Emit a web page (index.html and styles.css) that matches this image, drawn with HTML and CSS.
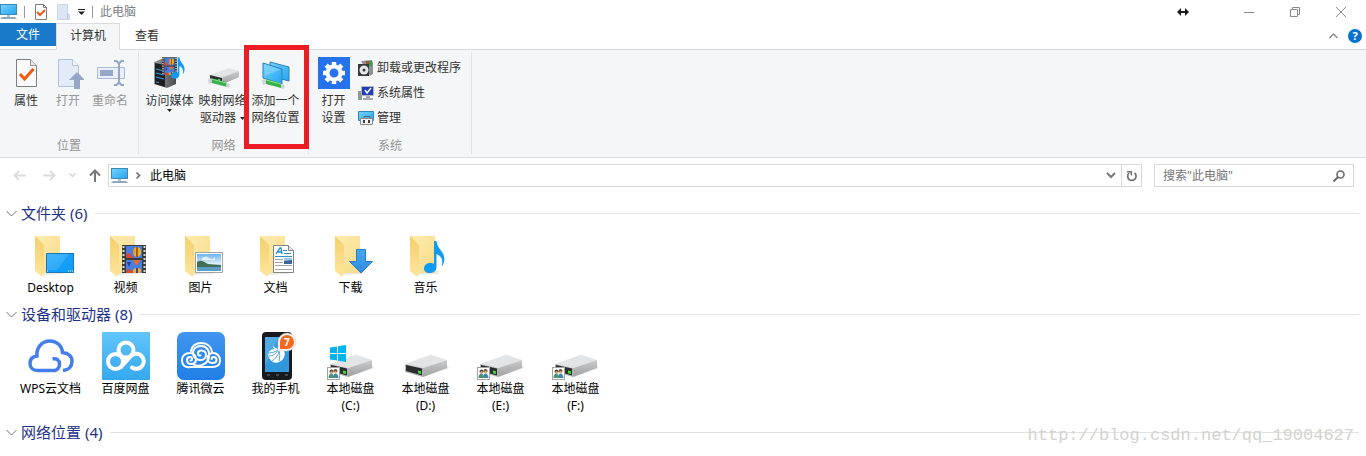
FILE: index.html
```html
<!DOCTYPE html>
<html lang="zh-CN">
<head>
<title>此电脑</title>
<meta charset="UTF-8">
<meta name="viewport" content="width=device-width, initial-scale=1.0">
<link rel="stylesheet" href="styles.css">
</head>
<body>
<!-- shared icon parts -->
<svg class="defs" width="0" height="0" aria-hidden="true">
    <defs>
        <linearGradient id="g-screen" x1="0" y1="0" x2="1" y2="1"><stop offset="0" stop-color="#79d2fb"/><stop offset="1" stop-color="#1fa5f5"/></linearGradient>
        <linearGradient id="g-folder" x1="0" y1="0" x2="1" y2="1"><stop offset="0" stop-color="#fdebb0"/><stop offset="1" stop-color="#f8dc88"/></linearGradient>
        <linearGradient id="g-flap" x1="0" y1="0" x2="0" y2="1"><stop offset="0" stop-color="#f3cf6c"/><stop offset="1" stop-color="#ffe59c"/></linearGradient>
        <linearGradient id="g-desk" x1="0" y1="0" x2="1" y2="1"><stop offset="0" stop-color="#2cb0fc"/><stop offset=".5" stop-color="#16a0f8"/><stop offset="1" stop-color="#0c9afc"/></linearGradient>
        <linearGradient id="g-arrow" x1="0" y1="0" x2="0" y2="1"><stop offset="0" stop-color="#4aa7ef"/><stop offset="1" stop-color="#2e8be0"/></linearGradient>
        <linearGradient id="g-side" x1="0" y1="0" x2="0" y2="1"><stop offset="0" stop-color="#c9cacb"/><stop offset="1" stop-color="#9fa1a3"/></linearGradient>
        <linearGradient id="g-sky" x1="0" y1="0" x2="0" y2="1"><stop offset="0" stop-color="#6db3ee"/><stop offset=".6" stop-color="#e3f1fa"/><stop offset="1" stop-color="#4a8fbf"/></linearGradient>
        <linearGradient id="g-baidu" x1="0" y1="0" x2="0" y2="1"><stop offset="0" stop-color="#62c5fb"/><stop offset="1" stop-color="#35a9ee"/></linearGradient>
        <linearGradient id="g-weiyun" x1="0" y1="0" x2="0" y2="1"><stop offset="0" stop-color="#4196f0"/><stop offset="1" stop-color="#207fe6"/></linearGradient>
        <linearGradient id="g-tower" x1="0" y1="0" x2="1" y2="0"><stop offset="0" stop-color="#999"/><stop offset="1" stop-color="#4c4c4e"/></linearGradient>
    </defs>
    <symbol id="monitor" viewBox="0 0 17 15">
        <rect x=".5" y=".5" width="16" height="10" fill="url(#g-screen)" stroke="#3d88b5"/>
        <path d="M7 11h3v2H7z" fill="#a9c3d2"/>
        <path d="M2 13h13l2 2H0z" fill="#8fa9b8"/>
    </symbol>
    <symbol id="folder" viewBox="-1 0 49 48">
        <path d="M14 44l22-1 1-3H16z" fill="#e9e9e9"/>
        <path d="M8 5h25v37H15z" fill="url(#g-folder)"/>
        <path d="M8 5l8 8c1 1 1 2 1 4v24c0 3-1 5-3 4l-6-5z" fill="url(#g-flap)"/>
    </symbol>
    <symbol id="drive" viewBox="-1 0 49 48">
        <path d="M22 45l25-9-2-3-20 9z" fill="#e8e8e8"/>
        <path d="M3 32l25-9q1-.5 2 0l15 5-24 8z" fill="#e3e4e6"/>
        <path d="M21 36l24-8v8l-24 9z" fill="url(#g-side)"/>
        <path d="M3 32l18 4v9L3 40z" fill="#b4b6b8"/>
        <path d="M4 33l16 3.500v7L4 39z" fill="#2b2d2f"/>
        <path d="M16 38.500l3 .7V42l-3-.7z" fill="#3be03b"/>
    </symbol>
    <symbol id="shared" viewBox="-1 0 49 48">
        <rect x=".5" y="35.500" width="12" height="12" fill="#fff" stroke="#a3a3a3"/>
        <circle cx="4.500" cy="39.500" r="2" fill="#5b4632"/><circle cx="8.500" cy="39" r="2" fill="#6a533a"/>
        <circle cx="4.500" cy="40.500" r="1.200" fill="#e7b58c"/><circle cx="8.500" cy="40.200" r="1.200" fill="#e7b58c"/>
        <path d="M6 46c0-6 5-6 5.500 0z" fill="#3f83b3"/><path d="M1.500 46c0-6 5-6 6 0z" fill="#4d9272"/>
    </symbol>
    <symbol id="film" viewBox="0 0 24 28">
        <path d="M0 0h24v28H0z" fill="#3a3a3c"/>
        <path d="M1.500 1v27M22.500 1v27" stroke="#d9d9d9" stroke-width="2" stroke-dasharray="2 2"/>
        <path d="M4 1h16v12H4zM4 15h16v13H4z" fill="#4a7de0"/>
        <path d="M4 9l3-1 5 5H4zM4 25l4-1 4 4H4z" fill="#d3493a"/>
        <ellipse cx="15" cy="7" rx="4" ry="5" fill="#f0b41e"/><path d="M15 2v10" stroke="#8b3a2a" stroke-width="1.500"/><path d="M12 4v5" stroke="#e0702a"/>
        <path d="M11 15h7l-3 5h-1z" fill="#ed6a2b"/>
        <ellipse cx="15" cy="26" rx="4" ry="3" fill="#f0b41e"/><path d="M15 23v5" stroke="#563a7d" stroke-width="2"/>
        <path d="M5 17h4l-2 5z" fill="#243f8e"/>
    </symbol>
    <symbol id="note" viewBox="0 0 21 32">
        <path d="M10 0h2.500c.5 4 2 6 4 9 4 5 5 9 2.500 15-.5 1-1.500 1-1 0 1-5-.5-9-5.500-11v13c0 4-3.500 6-7 6s-5.500-2-5.500-4.500C0 24 3 22 6.500 22c1.500 0 2.500.3 3.500.8z" fill="#0d9bf2"/>
    </symbol>
    <symbol id="pipe" viewBox="0 0 24 10">
        <path d="M1 1l4-1 1 4-4 2zM20 5l4 1-1 4-4-1z" fill="#cfd3d5"/>
        <path d="M5 0l15 4v5L5 5z" fill="#37b24a"/><path d="M5 1l15 4" stroke="#8ee096"/>
    </symbol>
</svg>

<header class="titlebar">
    <svg class="tb-icon" width="17" height="15"><use href="#monitor"/></svg>
    <span class="tb-sep"></span>
    <button class="tb-btn" aria-label="属性"><svg width="12" height="16" viewBox="0 0 12 16"><path d="M.5.500h8l3 3v12H.500z" fill="#fff" stroke="#7d7d7d"/><path d="M8.500.500v3h3" fill="none" stroke="#7d7d7d"/><path d="M2 8l3 3 5-5" fill="none" stroke="#ea5a15" stroke-width="2"/></svg></button>
    <button class="tb-btn" aria-label="新建文件夹"><svg width="13" height="16" viewBox="0 0 13 16"><path d="M.5.500h10v9l2 1v5H.500z" fill="#dbe5f3" stroke="#c9d6e8"/><path d="M10.500 9v6" stroke="#b7c6dc"/></svg></button>
    <button class="tb-btn tb-more" aria-label="自定义快速访问工具栏"><svg width="7" height="6" viewBox="0 0 7 6"><path d="M0 0h7v1H0zM0 2.500h7L3.500 6z" fill="#222"/></svg></button>
    <span class="tb-sep"></span>
    <h1 class="tb-title">此电脑</h1>
    <svg class="tb-resize" width="12" height="8" viewBox="0 0 12 8"><path d="M0 4l4-4v3h4V0l4 4-4 4V5H4v3z" fill="#1c1c1c"/></svg>
    <button class="win-btn" aria-label="最小化"><svg width="10" height="10"><path d="M0 5.500h10" stroke="#8a8a8a"/></svg></button>
    <button class="win-btn" aria-label="还原"><svg width="10" height="10" fill="none" stroke="#8a8a8a"><path d="M.5 2.500h7v7h-7zM2.500 2.500v-2h7v7h-2"/></svg></button>
    <button class="win-btn" aria-label="关闭"><svg width="10" height="10"><path d="M0 0l10 10M10 0L0 10" stroke="#8a8a8a"/></svg></button>
</header>

<nav class="tabs">
    <button class="tab tab-file">文件</button>
    <button class="tab tab-active">计算机</button>
    <button class="tab">查看</button>
    <button class="tab-tool" aria-label="最小化功能区"><svg width="9" height="6"><path d="M.5 5l4-4 4 4" fill="none" stroke="#8e8e8e" stroke-width="1.500"/></svg></button>
    <button class="tab-tool" aria-label="帮助"><span class="help">?</span></button>
</nav>

<div class="ribbon">
    <section class="group group-place">
        <div class="group-body">
            <button class="big">
                <svg width="32" height="32" viewBox="0 0 32 32"><path d="M6.500 2.500h14l6 6v21h-20z" fill="#fbfbfb" stroke="#7e7e7e"/><path d="M20.500 2.500v6h6" fill="#e8e8e8" stroke="#8f8f8f"/><path d="M10 17l4.500 5 9-10" fill="none" stroke="#ee5a12" stroke-width="3"/></svg>
                属性
            </button>
            <button class="big" disabled>
                <svg width="32" height="32" viewBox="0 0 32 32"><path d="M6.500 2.500h14l6 6v21h-20z" fill="#e2ebf8" stroke="#afc2df"/><path d="M20.500 2.500v6h6" fill="#f3f7fc" stroke="#afc2df"/><path d="M25 15l8 8h-5v9h-6v-9h-5z" fill="#94a7c6"/></svg>
                打开
            </button>
            <button class="big" disabled>
                <svg width="32" height="32" viewBox="0 0 32 32"><path d="M3.500 10.500h27v11h-27z" fill="#e8effa" stroke="#a9bbd8"/><path d="M6 13h13v6H6z" fill="#94a7c6"/><path d="M20 3h3l2 2 2-2h3v2h-2l-2 2v18l2 2h2v2h-3l-2-2-2 2h-3v-2h2l2-2V7l-2-2h-2z" fill="#94a7c6"/></svg>
                重命名
            </button>
        </div>
        <div class="group-label">位置</div>
    </section>
    <section class="group group-net">
        <div class="group-body">
            <button class="big">
                <svg width="32" height="32" viewBox="0 0 32 32"><path d="M0 5l10-4 12 3v23l-9 4-13-4z" fill="url(#g-tower)"/><path d="M1 6l10 2v22L1 27z" fill="#1e1f22"/><path d="M2 12l8 2M2 16l8 2M2 20l8 2" stroke="#2a9ee8" stroke-width="1.200"/><path d="M2 25l3 .5" stroke="#2a9ee8"/><use href="#film" x="8" y="0" width="15" height="18"/><use href="#note" x="17" y="0" width="14" height="22"/></svg>
                访问媒体
                <svg class="caret" width="5" height="3"><path d="M0 0h5L2.500 3z" fill="#222"/></svg>
            </button>
            <button class="big">
                <svg width="32" height="32" viewBox="0 0 32 32"><path d="M3 18l19-7 10 3-18 8z" fill="#e3e4e6"/><path d="M14 21l18-7v6l-18 8z" fill="url(#g-side)"/><path d="M3 18l12 3v6L3 23z" fill="#2b2d2f"/><path d="M11 22h2v2h-2z" fill="#3be03b"/><use href="#pipe" x="0" y="21" width="23" height="10"/></svg>
                映射网络<br>驱动器<svg class="caret-side" width="5" height="3"><path d="M0 0h5L2.500 3z" fill="#222"/></svg>
            </button>
            <button class="big marked">
                <svg width="32" height="32" viewBox="0 0 32 32"><path d="M10 5l19 5v14l-19-5z" fill="url(#g-screen)" stroke="#2c80b5"/><path d="M3 6l19 6v15L3 21z" fill="url(#g-screen)" stroke="#2c80b5"/><path d="M4 7l17 5.500-16 6z" fill="#8edafc" opacity=".5"/><use href="#pipe" x="1" y="22" width="24" height="10"/></svg>
                添加一个<br>网络位置
                <span class="mark"></span>
            </button>
        </div>
        <div class="group-label">网络</div>
    </section>
    <section class="group group-sys">
        <div class="group-body">
            <button class="big">
                <svg width="32" height="32" viewBox="0 0 32 32"><path d="M0 0h32v32H0z" fill="#2672ec"/><circle cx="16" cy="16" r="6.500" fill="none" stroke="#fff" stroke-width="4"/><g stroke="#fff" stroke-width="4.500"><path d="M16 5v4M16 23v4M5 16h4M23 16h4"/><path d="M8.200 8.200l3 3M20.800 20.800l3 3M23.800 8.200l-3 3M11.200 20.800l-3 3"/></g></svg>
                打开<br>设置
            </button>
            <div class="small-list">
                <button class="small"><svg width="16" height="16" viewBox="0 0 16 16"><path d="M3 1l11-1 1 3v11l-3 2z" fill="#8c9196"/><path d="M8 1h5v4H8z" fill="#b04a30"/><path d="M11 1h3v5h-3z" fill="#3e9a52"/><path d="M0 4h11v12H0z" fill="#36383a"/><circle cx="6" cy="10" r="4.500" fill="#e6e8e8"/><circle cx="6" cy="10" r="1.500" fill="#36383a"/></svg>卸载或更改程序</button>
                <button class="small"><svg width="16" height="16" viewBox="0 0 16 16"><path d="M0 6h4v9H0z" fill="#929698"/><path d="M1 13h2v1H1z" fill="#50d44d"/><path d="M3.500 1.500h12v9h-12z" fill="#1f3fb8" stroke="#b4b7ba"/><path d="M7 5l2 3 4-5" fill="none" stroke="#fff" stroke-width="1.500"/><path d="M8 11h4v2h3v2H5v-2h3z" fill="#a5aaae"/></svg>系统属性</button>
                <button class="small"><svg width="16" height="16" viewBox="0 0 16 16"><path d="M.5 1.500h15v9H.500z" fill="url(#g-screen)" stroke="#3486bd"/><path d="M6 8V6.500h6V8" fill="none" stroke="#666"/><path d="M2.500 8.500h12v6h-12z" fill="#eef0f1" stroke="#858a8e"/><path d="M5 10h2v3H5zM10 10h2v3h-2z" fill="#3d4043"/></svg>管理</button>
            </div>
        </div>
        <div class="group-label">系统</div>
    </section>
</div>

<div class="navbar">
    <button class="nav-btn" aria-label="后退" disabled><svg width="13" height="11"><path d="M6 1L1.500 5.500 6 10M1.500 5.500H13" fill="none" stroke="#dcdcdc" stroke-width="2"/></svg></button>
    <button class="nav-btn" aria-label="前进" disabled><svg width="13" height="11"><path d="M7 1l4.500 4.500L7 10M11.500 5.500H0" fill="none" stroke="#dcdcdc" stroke-width="2"/></svg></button>
    <button class="nav-btn nav-narrow" aria-label="最近浏览的位置" disabled><svg width="7" height="5"><path d="M.5.500l3 3 3-3" fill="none" stroke="#d4d4d4" stroke-width="1.500"/></svg></button>
    <button class="nav-btn nav-up" aria-label="上移"><svg width="12" height="13"><path d="M1 6.500l5-5 5 5M6 1.500V13" fill="none" stroke="#777" stroke-width="2"/></svg></button>
    <div class="address">
        <svg width="17" height="15"><use href="#monitor"/></svg>
        <svg class="crumb-arrow" width="5" height="7"><path d="M.5.500l3 3-3 3" fill="none" stroke="#666" stroke-width="1.500"/></svg>
        <button class="crumb">此电脑</button>
        <button class="addr-btn addr-drop" aria-label="以前的位置"><svg width="10" height="7"><path d="M1 1l4 4 4-4" fill="none" stroke="#777" stroke-width="2"/></svg></button>
        <button class="addr-btn addr-refresh" aria-label="刷新"><svg width="11" height="12" viewBox="0 0 11 12"><path d="M8.500 3a4.200 4.200 0 1 1-5.500.2" fill="none" stroke="#707070" stroke-width="1.700"/><path d="M1 1h5v5L4.500 4.500V2.500H1z" fill="#707070"/></svg></button>
    </div>
    <div class="search">
        <input class="search-input" type="text" aria-label="搜索" placeholder="搜索&quot;此电脑&quot;">
        <svg width="12" height="12" viewBox="0 0 12 12" fill="none" stroke="#6a6a6a"><circle cx="7.500" cy="4.500" r="3.500" stroke-width="1.600"/><path d="M5 7L.5 11.500" stroke-width="2"/></svg>
    </div>
</div>

<main class="content">
    <h2 class="head"><svg width="11" height="7"><path d="M.5 1l5 5 5-5" fill="none" stroke="#777"/></svg>文件夹 (6)</h2>
    <div class="items">
        <a class="item" href="#"><svg width="49" height="48" viewBox="-1 0 49 48"><use href="#folder" x="-1" width="49" height="48"/><path d="M19 22h28v20H19z" fill="url(#g-desk)"/><path d="M19.500 22.500h27v19h-27z" fill="none" stroke="#1979b8"/><path d="M20 23h22L30 39H20z" fill="#fff" opacity=".12"/><path d="M20 40h1M41 40h1M43 40h1M45 40h1" stroke="#fff"/></svg>Desktop</a>
        <a class="item" href="#"><svg width="49" height="48" viewBox="-1 0 49 48"><use href="#folder" x="-1" width="49" height="48"/><use href="#film" x="20" y="14" width="24" height="28"/></svg>视频</a>
        <a class="item" href="#"><svg width="49" height="48" viewBox="-1 0 49 48"><use href="#folder" x="-1" width="49" height="48"/><path d="M18.500 21.500h27v20h-27z" fill="#fff" stroke="#a2a2a2"/><path d="M20 23h24v17H20z" fill="url(#g-sky)"/><path d="M20 31c4-3 7 0 11 2l13 1v2H20z" fill="#3f6f57"/><path d="M20 36h24v4H20z" fill="#5c9bc4"/><path d="M25 27q4-3 7 0t6-1v3H25z" fill="#fff" opacity=".7"/></svg>图片</a>
        <a class="item" href="#"><svg width="49" height="48" viewBox="-1 0 49 48"><use href="#folder" x="-1" width="49" height="48"/><path d="M21.500 14.500h15l5 5v22h-20z" fill="#fff" stroke="#858585"/><path d="M36.500 14.500v5h5" fill="#e2e2e2" stroke="#858585"/><path d="M24 23l4-6h1l1 6M26 21h4" fill="none" stroke="#1c87c9" stroke-width="1.300"/><path d="M31 19.500h4M32 22.500h7M23 25.500h17" stroke="#2a94d6"/><path d="M23 28.500h8M23 31.500h8M23 34.500h17M23 38.500h17" stroke="#a3a3a3"/><path d="M32 27h8v6h-8z" fill="#35699b"/><path d="M32 27h8v2l-8 1z" fill="#9fc8e8"/></svg>文档</a>
        <a class="item" href="#"><svg width="49" height="48" viewBox="-1 0 49 48"><use href="#folder" x="-1" width="49" height="48"/><path d="M29.500 18.500h9v12h7L34 42 22.500 30.500h7z" fill="url(#g-arrow)" stroke="#2a7cc7"/></svg>下载</a>
        <a class="item" href="#"><svg width="49" height="48" viewBox="-1 0 49 48"><use href="#folder" x="-1" width="49" height="48"/><use href="#note" x="22" y="10" width="21" height="32"/></svg>音乐</a>
    </div>

    <h2 class="head"><svg width="11" height="7"><path d="M.5 1l5 5 5-5" fill="none" stroke="#777"/></svg>设备和驱动器 (8)</h2>
    <div class="items">
        <a class="item" href="#"><svg width="49" height="48" viewBox="-1 0 49 48"><path d="M29 38.500H10.500C6 38.500 3 35.500 3 31.500c0-4.500 3-7 7-7.500-1-7 4-15 13-15 7 0 12 5 12.500 11.500 6 .5 9.500 4 9.500 9 0 5-3.500 8.500-9 9M25.500 27c4-1 7 1 7 5 0 3.500-2 6.500-6 6.500" fill="none" stroke="#437fec" stroke-width="3.500"/></svg>WPS云文档</a>
        <a class="item" href="#"><svg width="49" height="48" viewBox="-1 0 49 48"><rect width="48" height="48" rx="1" fill="url(#g-baidu)"/><g fill="none" stroke="#fff" stroke-width="4" stroke-linecap="round"><circle cx="24" cy="18" r="7.500"/><circle cx="13.500" cy="29.500" r="7.500"/><path d="M19 35l10-11a7.500 7.500 0 1 1 1 11.500"/></g></svg>百度网盘</a>
        <a class="item" href="#"><svg width="49" height="48" viewBox="-1 0 49 48"><rect width="48" height="48" rx="7" fill="url(#g-weiyun)"/><g fill="none" stroke="#fff" stroke-width="2" stroke-linecap="round"><path d="M14 19c1-5 5-8 10.500-8 6 0 10 4 10.500 9M13 35c-5 1-8-2-8-6.500S8 21 13 21c4 0 6 3 6 6s-2 5-5 5-4-2-4-4 1.500-3 3-3 2 1 2 2-1 1.500-1.500 1.500M13 35h22c5 0 8-2 8-6.500S40 21 36 21c-3.500 0-5.500 2.500-5.500 5.500S33 31 35.500 31s4-1.500 4-3.500-1.500-2.500-3-2.500-2 1-1.800 2"/><path d="M17 33c6 2 14-1 15-8s-3-11-8-11-8 3-8 7 3 7 7 7 6-2.500 6-5-2-4.500-4.500-4.500-3.500 1.500-3.500 3 1 2.300 2.500 2"/></g></svg>腾讯微云</a>
        <a class="item" href="#"><svg width="49" height="48" viewBox="-1 0 49 48"><rect x="10" width="30" height="48" rx="4" fill="#17191d"/><path d="M13 5h24v35H13z" fill="#3298dd"/><path d="M13 5h14L13 34z" fill="#70bcec" opacity=".5"/><path d="M21 14c2 2 4 2 5 3 8-1 8 6 5 10-4 5-11 5-13 0-4-5-1-10 6-10-2 0-3-1-3-3z" fill="#fff"/><path d="M17 24c4 0 7-2 9-6M20 29c3-2 6-5 7-10M27 29c1-4 1-7 0-10M16 21c4 0 7-1 10-3" fill="none" stroke="#4ea5df"/><path d="M15 43h3M24 43h3M33 43h3" stroke="#777"/><path d="M26 19V10a9 9 0 1 1 9 9z" fill="#f4f4f4" stroke="#cfcfcf" stroke-width=".5"/><path d="M28 17v-7a7 7 0 1 1 7 7z" fill="#f4691f"/><text class="badge-num" x="32" y="14">7</text></svg>我的手机</a>
        <a class="item" href="#"><svg width="49" height="48" viewBox="-1 0 49 48"><use href="#drive" x="-1" width="49" height="48"/><path d="M3 15.500l7-1V21H3zM11 14.300l8-1.300v8h-8zM3 22h7v6.500l-7-1zM11 22h8v8l-8-1.300z" fill="#00b4f1"/><use href="#shared" x="-1" width="49" height="48"/></svg>本地磁盘<br>(C:)</a>
        <a class="item" href="#"><svg width="49" height="48"><use href="#drive"/></svg>本地磁盘<br>(D:)</a>
        <a class="item" href="#"><svg width="49" height="48"><use href="#drive"/><use href="#shared"/></svg>本地磁盘<br>(E:)</a>
        <a class="item" href="#"><svg width="49" height="48"><use href="#drive"/><use href="#shared"/></svg>本地磁盘<br>(F:)</a>
    </div>

    <h2 class="head"><svg width="11" height="7"><path d="M.5 1l5 5 5-5" fill="none" stroke="#777"/></svg>网络位置 (4)</h2>
    <div class="watermark">http://blog.csdn.net/qq_19004627</div>
</main>
</body>
</html>
```
FILE: styles.css
```css
* {
    box-sizing: border-box;
}

body {
    margin: 0;
    background-color: #fff;
    color: #000;
    font-family: "Noto Sans", "Noto Sans CJK SC", sans-serif;
    font-size: 12px;
    line-height: 17px;
}

button, input {
    border: none;
    padding: 0;
    background: none;
    color: inherit;
    font: inherit;
}

svg {
    flex: none;
}

.defs {
    position: absolute;
}

/* title bar */
.titlebar {
    display: flex;
    align-items: center;
    height: 23px;
    padding-right: 2px;
}

.tb-sep {
    width: 1px;
    height: 12px;
    margin: 0 7px;
    background-color: #999;
}

.tb-btn {
    display: flex;
    margin-left: 3px;
}

.tb-btn + .tb-btn {
    margin-left: 10px;
}

.tb-btn.tb-more {
    margin-left: 8px;
}

.tb-title {
    margin: 0;
    font-size: 12px;
    font-weight: normal;
    color: #7b7f85;
}

.tb-resize {
    margin-left: auto;
    margin-right: 37px;
}

.win-btn {
    display: flex;
    justify-content: center;
    width: 46px;
}

/* tabs */
.tabs {
    display: flex;
    height: 27px;
    padding-right: 4px;
    border-bottom: 1px solid #dadbdc;
}

.tab {
    width: 54px;
    height: 24px;
    color: #333;
}

.tab-file {
    width: 56px;
    height: 23px;
    background-color: #1979ca;
    color: #fff;
}

.tab-active {
    width: 64px;
    height: 27px;
    padding-bottom: 3px;
    border: 1px solid #dadbdc;
    border-bottom: none;
    background-color: #f5f6f7;
}

.tab-tool {
    display: flex;
    align-items: center;
    margin-left: 10px;
}

.tab + .tab-tool {
    margin-left: auto;
}

.help {
    width: 14px;
    height: 14px;
    border-radius: 50%;
    background-color: #0873cf;
    color: #fff;
    font-size: 11px;
    font-weight: bold;
    line-height: 14px;
}

/* ribbon */
.ribbon {
    display: flex;
    padding: 2px 0 3px;
    border-bottom: 1px solid #dadbdc;
    background-color: #f5f6f7;
    color: #333;
}

.group {
    display: flex;
    flex-direction: column;
    border-right: 1px solid #e2e3e4;
}

.group-body {
    display: flex;
    align-items: flex-start;
    min-height: 85px;
    padding: 0 6px 0 4px;
}

.group-label {
    text-align: center;
    color: #929496;
}

.group-place .group-body { padding: 0 7px 0 5px; }
.group-sys .group-body { padding: 0 10px 0 0; }

.big {
    position: relative;
    width: 53px;
    padding-top: 5px;
    white-space: nowrap;
}

.big > svg:first-child {
    display: block;
    margin: 0 auto 3px;
}

.big:disabled {
    color: #949698;
}

.group-place .big { width: 42px; }
.group-sys .big { width: 49px; }

.big .caret {
    display: block;
    margin: 0 auto;
}

.caret-side {
    margin-left: 4px;
    vertical-align: 2px;
}

.mark {
    position: absolute;
    top: -7px;
    left: -5px;
    width: 65px;
    height: 104px;
    border: 5px solid #ed1c24;
}

.small-list {
    padding-top: 3px;
}

.small {
    display: flex;
    align-items: center;
    gap: 3px;
    height: 25px;
}

/* address bar */
.navbar {
    display: flex;
    height: 29px;
    padding: 6px 12px 0 4px;
}

.nav-btn {
    display: flex;
    align-items: center;
    justify-content: center;
    width: 30px;
}

.nav-btn.nav-narrow { width: 17px; }
.nav-btn.nav-up { width: 27px; }

.address {
    display: flex;
    flex: 1;
    align-items: center;
    padding-left: 2px;
    border: 1px solid #d9d9d9;
}

.crumb-arrow {
    margin: 0 9px 0 8px;
}

.addr-btn {
    display: flex;
    align-items: center;
    justify-content: center;
    width: 20px;
    height: 100%;
}

.addr-drop {
    margin-left: auto;
}

.addr-refresh {
    border-left: 1px solid #d9d9d9;
}

.search {
    display: flex;
    align-items: center;
    width: 200px;
    margin-left: 12px;
    padding: 0 8px;
    border: 1px solid #d9d9d9;
}

.search-input {
    flex: 1;
    min-width: 0;
    outline: none;
}

.search-input::placeholder {
    color: #757575;
}

/* file list */
.content {
    position: relative;
    padding: 15px 7px 13px 6px;
}

.head {
    display: flex;
    align-items: center;
    margin: 0;
    font-size: 15px;
    font-weight: normal;
    line-height: 22px;
    color: #1e3287;
}

.head svg {
    margin-right: 4px;
}

.head::after {
    content: "";
    flex: 1;
    height: 1px;
    margin-left: 8px;
    background-color: #e2e2e2;
}

.items {
    display: flex;
    flex-wrap: wrap;
    padding: 7px 0 7px 7px;
}

.item {
    width: 75px;
    text-align: center;
    text-decoration: none;
    color: #000;
}

.item svg {
    display: block;
    margin: 0 auto;
}

.badge-num {
    fill: #fff;
    font-size: 10px;
    font-weight: bold;
}

.watermark {
    position: absolute;
    right: 12px;
    bottom: 9px;
    font-family: "Liberation Mono", monospace;
    font-size: 17px;
    line-height: 22px;
    color: #d3d3ce;
}
```
